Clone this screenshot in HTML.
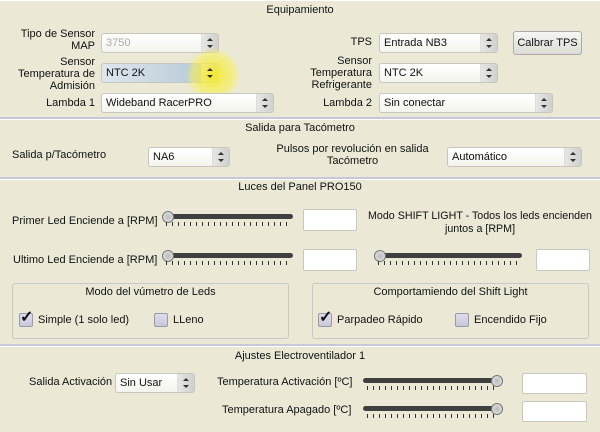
<!DOCTYPE html>
<html><head><meta charset="utf-8"><style>
*{box-sizing:border-box;margin:0;padding:0}
body{width:600px;height:430px;overflow:hidden;background:#ebe9d6;font-family:"Liberation Sans",sans-serif;font-size:11px;color:#111;position:relative}
.a{position:absolute;white-space:nowrap}
.sec{position:absolute;left:0;width:600px;border-top:1px solid #fff;border-bottom:2px solid #c8c6d8}
.grp{position:absolute;border:1px solid #c8c8c8;border-radius:3px}
.cb{position:absolute;height:20px;border:1px solid #c6c6c0;border-radius:3px;background:linear-gradient(#fff,#f4f4ee);padding:3px 0 0 4px}
.cb:after{content:"";position:absolute;right:0;top:0;bottom:0;width:16px;background:linear-gradient(90deg,#e6e6e2,#d0d0cc);border-left:1px solid #ddd}
.cb i{position:absolute;right:5px;top:4px;width:6px;height:10px;z-index:2}
.cb i:before,.cb i:after{content:"";position:absolute;left:0;border-left:3px solid transparent;border-right:3px solid transparent}
.cb i:before{top:0;border-bottom:3px solid #333}
.cb i:after{bottom:0;border-top:3px solid #333}
.r{text-align:right}
.c{text-align:center}
.in{position:absolute;background:#fff;border:1px solid #c8c8c0;border-radius:2px}
.sl{position:absolute;height:14px}
.sl .t{position:absolute;left:0;right:0;top:3px;height:5px;background:#404040;border-radius:3px}
.sl .k{position:absolute;top:0;width:12px;height:12px;border-radius:50%;background:radial-gradient(#bbb,#e8e8e8);border:1px solid #777}
.sl .tk{position:absolute;left:4px;right:4px;top:11px;height:4px;background:repeating-linear-gradient(90deg,#333 0 1px,transparent 1px 6px)}
.chk{position:absolute;width:14px;height:14px;border:1px solid #9a9aa8;border-radius:2px;background:linear-gradient(#dde,#c8c8d8)}
</style></head><body>
<div class="sec" style="top:0;height:119px"></div>
<div class="sec" style="top:119px;height:60px"></div>
<div class="sec" style="top:179px;height:167px"></div>
<div class="sec" style="top:346px;height:86px;border-bottom:none"></div>

<div class="a c" style="left:0;width:600px;top:4px">Equipamiento</div>
<div class="a r" style="left:0;width:95px;top:28px;line-height:12px;white-space:normal">Tipo de Sensor<br>MAP</div>
<div class="cb" style="left:101px;top:33px;width:118px;color:#aaa">3750<i></i></div>
<div class="a r" style="left:0;width:95px;top:56px;line-height:12px">Sensor<br>Temperatura de<br>Admisión</div>
<div class="cb" style="left:101px;top:63px;width:118px;background:linear-gradient(90deg,#dfe6ee,#b0c6d4)">NTC 2K<i></i></div>
<div class="a" style="left:186px;top:48px;width:54px;height:54px;border-radius:50%;background:radial-gradient(rgba(245,235,40,.95),rgba(248,240,90,.55) 55%,rgba(250,250,150,0) 72%)"></div>
<div class="a r" style="left:0;width:95px;top:97px">Lambda 1</div>
<div class="cb" style="left:101px;top:93px;width:173px">Wideband RacerPRO<i></i></div>
<div class="a r" style="left:300px;width:72px;top:36px">TPS</div>
<div class="cb" style="left:379px;top:33px;width:119px">Entrada NB3<i></i></div>
<div class="a c" style="left:513px;top:31px;width:69px;height:24px;border:1px solid #aaa;border-radius:3px;background:linear-gradient(#f6f6f2,#dcdcd6);padding-top:5px">Calbrar TPS</div>
<div class="a r" style="left:280px;width:92px;top:55px;line-height:12px">Sensor<br>Temperatura<br>Refrigerante</div>
<div class="cb" style="left:379px;top:63px;width:119px">NTC 2K<i></i></div>
<div class="a r" style="left:300px;width:72px;top:97px">Lambda 2</div>
<div class="cb" style="left:379px;top:93px;width:174px">Sin conectar<i></i></div>

<div class="a c" style="left:0;width:600px;top:122px">Salida para Tacómetro</div>
<div class="a" style="left:12px;top:149px">Salida p/Tacómetro</div>
<div class="cb" style="left:148px;top:147px;width:82px">NA6<i></i></div>
<div class="a c" style="left:270px;width:165px;top:143px;line-height:12px">Pulsos por revolución en salida<br>Tacómetro</div>
<div class="cb" style="left:447px;top:147px;width:135px">Automático<i></i></div>

<div class="a c" style="left:0;width:600px;top:181px">Luces del Panel PRO150</div>
<div class="a" style="left:12px;top:215px">Primer Led Enciende a [RPM]</div>
<div class="sl" style="left:162px;top:211px;width:131px"><div class="t"></div><div class="k" style="left:0"></div><div class="tk"></div></div>
<div class="in" style="left:303px;top:209px;width:54px;height:22px"></div>
<div class="a" style="left:13px;top:254px">Ultimo Led Enciende a [RPM]</div>
<div class="sl" style="left:162px;top:250px;width:131px"><div class="t"></div><div class="k" style="left:0"></div><div class="tk"></div></div>
<div class="in" style="left:303px;top:249px;width:54px;height:22px"></div>
<div class="a c" style="left:368px;width:224px;top:210px;line-height:13px;font-size:10.7px">Modo SHIFT LIGHT - Todos los leds encienden<br>juntos a [RPM]</div>
<div class="sl" style="left:374px;top:250px;width:148px"><div class="t"></div><div class="k" style="left:0"></div><div class="tk"></div></div>
<div class="in" style="left:536px;top:249px;width:54px;height:22px"></div>
<div class="grp" style="left:12px;top:283px;width:277px;height:56px"></div>
<div class="a c" style="left:12px;width:277px;top:286px">Modo del vúmetro de Leds</div>
<div class="chk" style="left:19px;top:313px"></div><div class="a" style="left:20px;top:307px;font-size:16px;font-weight:bold">✓</div>
<div class="a" style="left:38px;top:314px">Simple (1 solo led)</div>
<div class="chk" style="left:154px;top:313px"></div>
<div class="a" style="left:173px;top:314px">LLeno</div>
<div class="grp" style="left:312px;top:283px;width:277px;height:56px"></div>
<div class="a c" style="left:312px;width:277px;top:286px">Comportamiendo del Shift Light</div>
<div class="chk" style="left:318px;top:313px"></div><div class="a" style="left:319px;top:307px;font-size:16px;font-weight:bold">✓</div>
<div class="a" style="left:337px;top:314px">Parpadeo Rápido</div>
<div class="chk" style="left:455px;top:313px"></div>
<div class="a" style="left:474px;top:314px">Encendido Fijo</div>

<div class="a c" style="left:0;width:600px;top:350px">Ajustes Electroventilador 1</div>
<div class="a" style="left:29px;top:376px">Salida Activación</div>
<div class="cb" style="left:115px;top:373px;width:80px">Sin Usar<i></i></div>
<div class="a" style="left:217px;top:376px">Temperatura Activación [ºC]</div>
<div class="sl" style="left:363px;top:375px;width:140px"><div class="t"></div><div class="k" style="right:0"></div><div class="tk"></div></div>
<div class="in" style="left:522px;top:373px;width:65px;height:21px"></div>
<div class="a" style="left:222px;top:404px">Temperatura Apagado [ºC]</div>
<div class="sl" style="left:363px;top:403px;width:140px"><div class="t"></div><div class="k" style="right:0"></div><div class="tk"></div></div>
<div class="in" style="left:522px;top:401px;width:65px;height:21px"></div>
</body></html>
